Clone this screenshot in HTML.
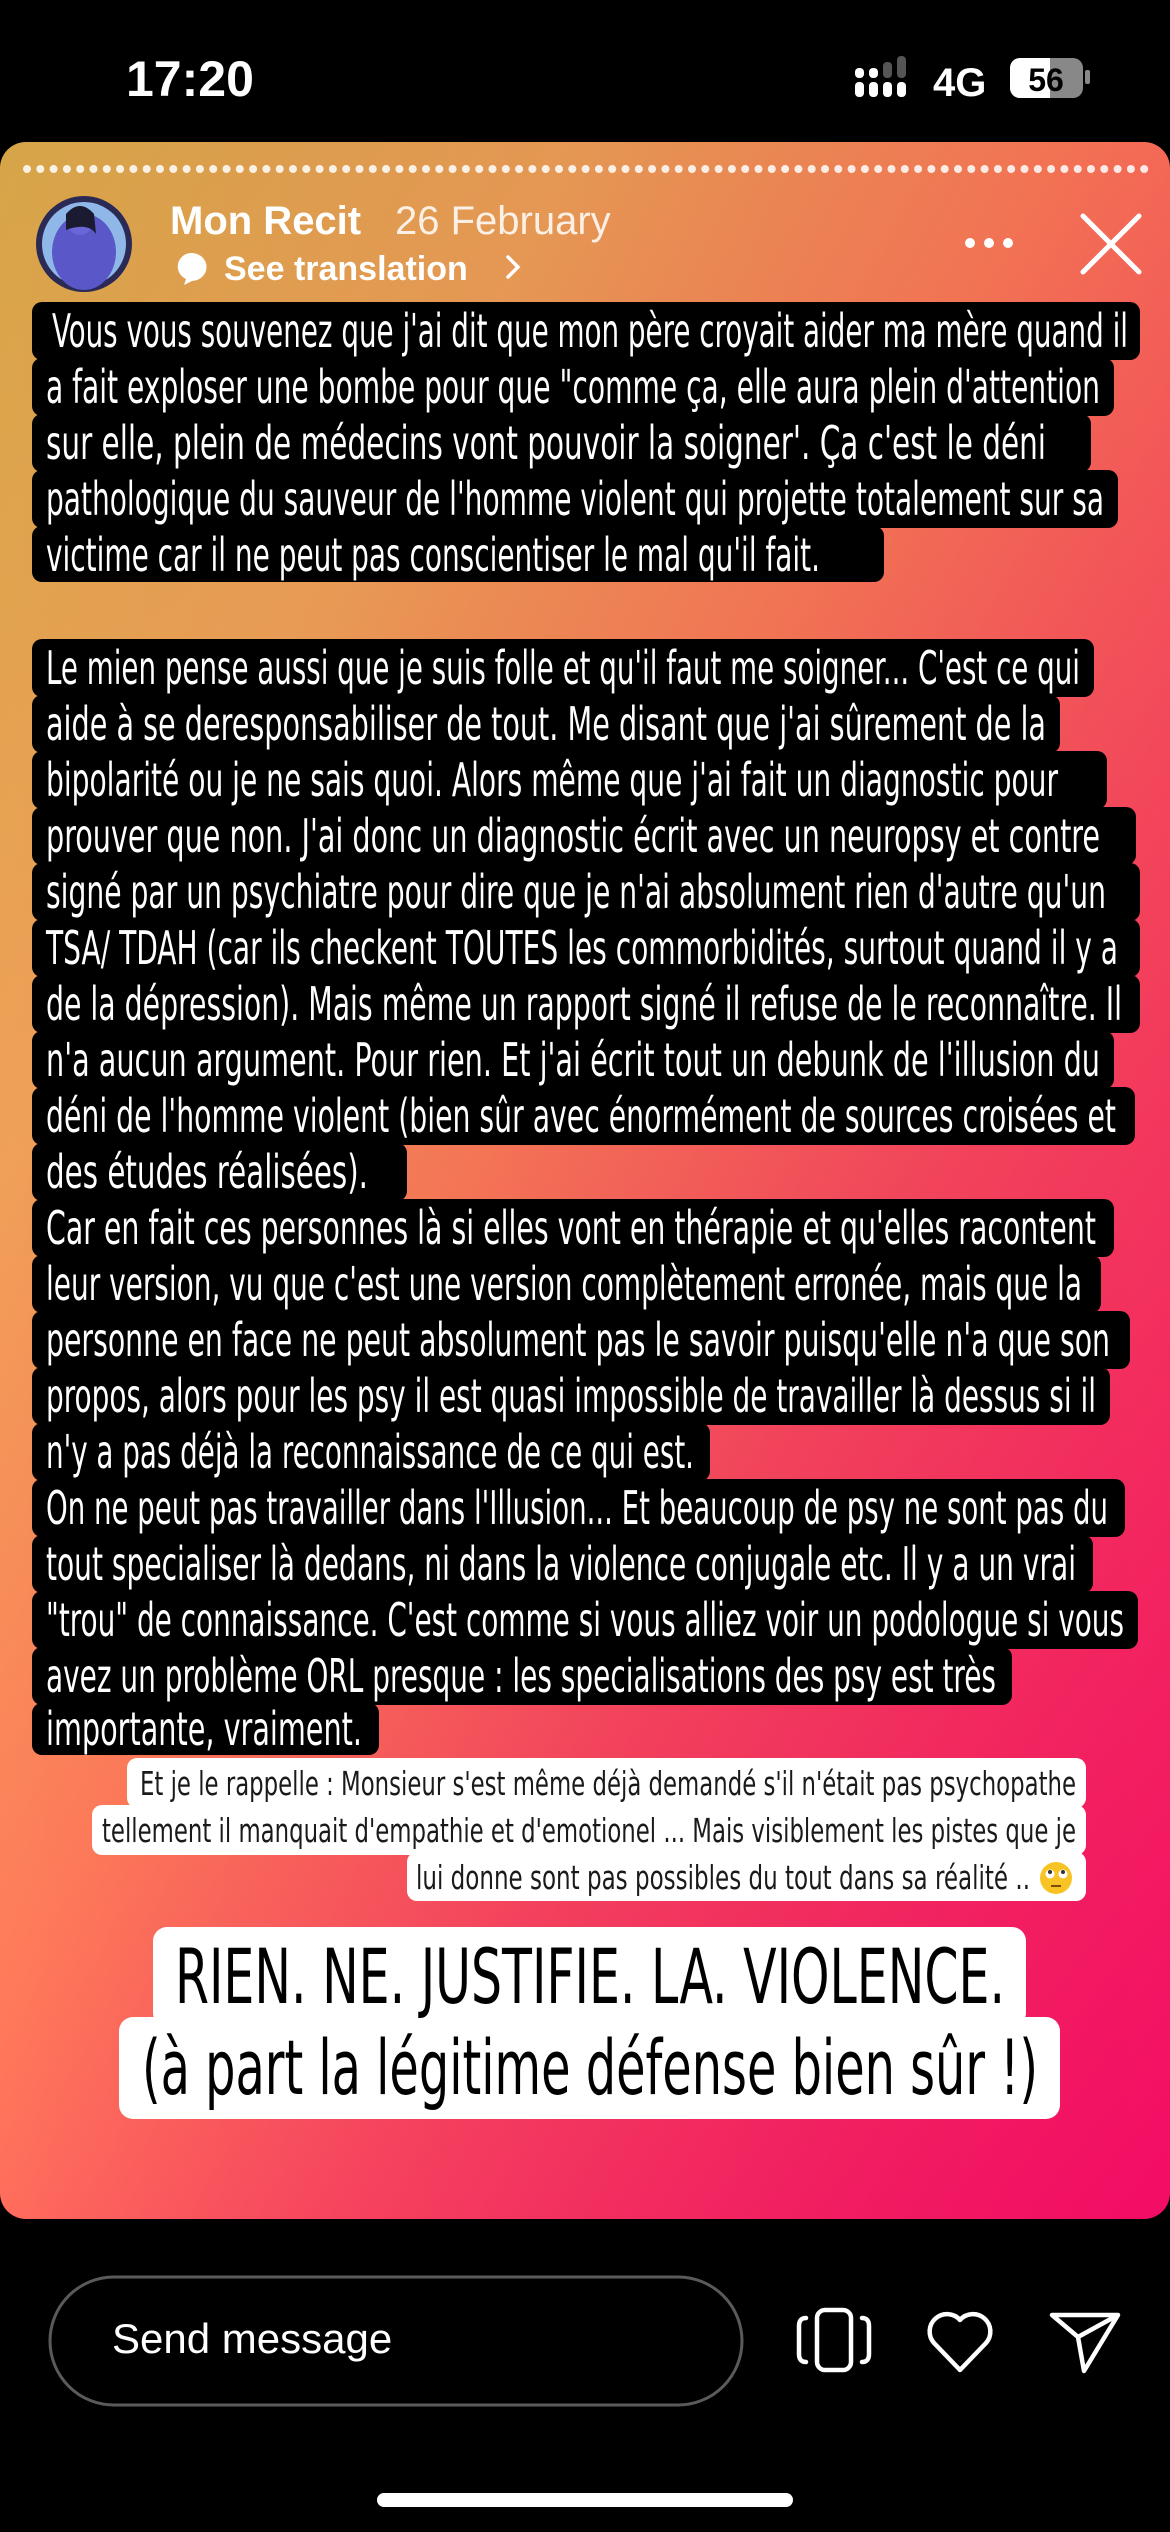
<!DOCTYPE html>
<html><head><meta charset="utf-8"><style>
html,body{margin:0;padding:0;background:#000;width:1170px;height:2532px;overflow:hidden}
svg{display:block}
.n{font-family:"Liberation Sans Narrow","DejaVu Sans Condensed","Liberation Sans",sans-serif}
.s{font-family:"Liberation Sans","DejaVu Sans",sans-serif}
</style></head><body>
<svg width="1170" height="2532" viewBox="0 0 1170 2532" xmlns="http://www.w3.org/2000/svg">
<defs>
<linearGradient id="g" x1="0" y1="0" x2="1" y2="1" gradientUnits="objectBoundingBox">
<stop offset="0" stop-color="#d6a548"/>
<stop offset="0.25" stop-color="#f0a058"/>
<stop offset="0.45" stop-color="#ff7a5a"/>
<stop offset="0.65" stop-color="#ff4462"/>
<stop offset="0.85" stop-color="#ff1a68"/>
<stop offset="1" stop-color="#ff006e"/>
</linearGradient>
<linearGradient id="g2" x1="0" y1="0" x2="1" y2="0">
<stop offset="0" stop-color="#000" stop-opacity="0"/>
<stop offset="1" stop-color="#b05030" stop-opacity="0.15"/>
</linearGradient>
</defs>
<rect width="1170" height="2532" fill="#000"/>
<!-- status bar -->
<text x="126" y="96" class="s" font-size="50" font-weight="bold" fill="#fff">17:20</text>
<g fill="#fff">
<rect x="855" y="82" width="9" height="15" rx="4"/><rect x="869" y="82" width="9" height="15" rx="4"/>
<rect x="883" y="82" width="9" height="15" rx="4"/><rect x="897" y="82" width="9" height="15" rx="4"/>
<rect x="855" y="68" width="9" height="10" rx="4"/><rect x="869" y="68" width="9" height="10" rx="4"/>
</g>
<g fill="#555"><rect x="883" y="62" width="9" height="16" rx="4"/><rect x="897" y="56" width="9" height="22" rx="4"/></g>
<text x="933" y="96" class="s" font-size="40" font-weight="bold" fill="#fff">4G</text>
<rect x="1010" y="58" width="73" height="40" rx="10" fill="#888"/>
<path d="M1020 58 h30 v40 h-30 a10 10 0 0 1 -10 -10 v-20 a10 10 0 0 1 10 -10z" fill="#fff"/>
<rect x="1085" y="70" width="5" height="14" rx="2" fill="#888"/>
<text x="1046" y="91" text-anchor="middle" class="s" font-size="32" font-weight="bold" fill="#000">56</text>
<!-- card -->
<rect x="0" y="142" width="1170" height="2077" rx="26" fill="url(#g)"/>
<rect x="0" y="142" width="1170" height="2077" rx="26" fill="url(#g2)"/>
<line x1="27" y1="169" x2="1147" y2="169" stroke="#fff" stroke-opacity="0.85" stroke-width="8" stroke-linecap="round" stroke-dasharray="0 13.3"/>
<!-- avatar -->
<circle cx="84" cy="244" r="48" fill="#2a2a55"/>
<circle cx="84" cy="244" r="42" fill="#8fb8e8"/>
<ellipse cx="84" cy="252" rx="32" ry="38" fill="#5a58c8"/>
<circle cx="80" cy="222" r="13" fill="#6a66d8"/>
<path d="M66 214 q14 -16 28 0 l2 20 q-8 -12 -30 -4z" fill="#1a1a30"/>
<text x="170" y="234" class="s" font-size="40" fill="#fff" font-weight="bold">Mon Recit</text>
<text x="395" y="234" class="s" font-size="40" fill="#fff" fill-opacity="0.85">26 February</text>
<path d="M186 254 a15 14 0 1 1 6 27 l-8 4 l2 -6 a15 14 0 0 1 0 -25z" fill="#fff"/>
<text x="224" y="280" class="s" font-size="34" font-weight="bold" fill="#fff">See translation</text>
<path d="M508 257 l10 10 l-10 10" stroke="#fff" stroke-width="3.5" fill="none" stroke-linecap="round"/>
<g fill="#fff"><circle cx="970" cy="243" r="5"/><circle cx="989" cy="243" r="5"/><circle cx="1008" cy="243" r="5"/></g>
<path d="M1083 216 L1139 272 M1139 216 L1083 272" stroke="#fff" stroke-width="5" stroke-linecap="round"/>

<!-- block 1 -->
<g fill="#000">
<rect x="32" y="302" width="1108" height="58" rx="10"/>
<rect x="32" y="358" width="1082" height="58" rx="10"/>
<rect x="32" y="414" width="1059" height="58" rx="10"/>
<rect x="32" y="470" width="1086" height="58" rx="10"/>
<rect x="32" y="526" width="852" height="56" rx="10"/>
</g>
<g class="n" font-size="46" fill="#fff">
<text x="52" y="347" textLength="1076" lengthAdjust="spacingAndGlyphs">Vous vous souvenez que j'ai dit que mon père croyait aider ma mère quand il</text>
<text x="46" y="403" textLength="1054" lengthAdjust="spacingAndGlyphs">a fait exploser une bombe pour que &quot;comme ça, elle aura plein d'attention</text>
<text x="46" y="459" textLength="1000" lengthAdjust="spacingAndGlyphs">sur elle, plein de médecins vont pouvoir la soigner'. Ça c'est le déni</text>
<text x="46" y="515" textLength="1058" lengthAdjust="spacingAndGlyphs">pathologique du sauveur de l'homme violent qui projette totalement sur sa</text>
<text x="46" y="571" textLength="774" lengthAdjust="spacingAndGlyphs">victime car il ne peut pas conscientiser le mal qu'il fait.</text>
</g>

<!-- block 2 -->
<g fill="#000">
<rect x="32" y="639" width="1062" height="58" rx="10"/>
<rect x="32" y="695" width="1028" height="58" rx="10"/>
<rect x="32" y="751" width="1075" height="58" rx="10"/>
<rect x="32" y="807" width="1104" height="58" rx="10"/>
<rect x="32" y="863" width="1108" height="58" rx="10"/>
<rect x="32" y="919" width="1108" height="58" rx="10"/>
<rect x="32" y="975" width="1108" height="58" rx="10"/>
<rect x="32" y="1031" width="1082" height="58" rx="10"/>
<rect x="32" y="1087" width="1103" height="58" rx="10"/>
<rect x="32" y="1143" width="375" height="58" rx="10"/>
<rect x="32" y="1199" width="1082" height="58" rx="10"/>
<rect x="32" y="1255" width="1069" height="58" rx="10"/>
<rect x="32" y="1311" width="1098" height="58" rx="10"/>
<rect x="32" y="1367" width="1078" height="58" rx="10"/>
<rect x="32" y="1423" width="678" height="58" rx="10"/>
<rect x="32" y="1479" width="1093" height="58" rx="10"/>
<rect x="32" y="1535" width="1061" height="58" rx="10"/>
<rect x="32" y="1591" width="1106" height="58" rx="10"/>
<rect x="32" y="1647" width="980" height="58" rx="10"/>
<rect x="32" y="1703" width="347" height="52" rx="10"/>
</g>
<g class="n" font-size="46" fill="#fff">
<text x="46" y="684" textLength="1034" lengthAdjust="spacingAndGlyphs">Le mien pense aussi que je suis folle et qu'il faut me soigner... C'est ce qui</text>
<text x="46" y="740" textLength="1000" lengthAdjust="spacingAndGlyphs">aide à se deresponsabiliser de tout. Me disant que j'ai sûrement de la</text>
<text x="46" y="796" textLength="1012" lengthAdjust="spacingAndGlyphs">bipolarité ou je ne sais quoi. Alors même que j'ai fait un diagnostic  pour</text>
<text x="46" y="852" textLength="1054" lengthAdjust="spacingAndGlyphs">prouver que non. J'ai donc un diagnostic écrit avec un neuropsy et contre</text>
<text x="46" y="908" textLength="1060" lengthAdjust="spacingAndGlyphs">signé par un psychiatre pour dire que je n'ai absolument rien d'autre qu'un</text>
<text x="46" y="964" textLength="1072" lengthAdjust="spacingAndGlyphs">TSA/ TDAH (car ils checkent TOUTES les commorbidités, surtout quand il y a</text>
<text x="46" y="1020" textLength="1076" lengthAdjust="spacingAndGlyphs">de la dépression). Mais même un rapport signé il refuse de le reconnaître. Il</text>
<text x="46" y="1076" textLength="1054" lengthAdjust="spacingAndGlyphs">n'a aucun argument. Pour rien. Et j'ai écrit tout un debunk de l'illusion du</text>
<text x="46" y="1132" textLength="1070" lengthAdjust="spacingAndGlyphs">déni de l'homme violent (bien sûr avec énormément de sources croisées et</text>
<text x="46" y="1188" textLength="322" lengthAdjust="spacingAndGlyphs">des études réalisées).</text>
<text x="46" y="1244" textLength="1050" lengthAdjust="spacingAndGlyphs">Car en fait ces personnes là si elles vont en thérapie et qu'elles racontent</text>
<text x="46" y="1300" textLength="1036" lengthAdjust="spacingAndGlyphs">leur version, vu que c'est une version complètement erronée, mais que la</text>
<text x="46" y="1356" textLength="1064" lengthAdjust="spacingAndGlyphs">personne en face ne peut absolument pas le savoir puisqu'elle n'a que son</text>
<text x="46" y="1412" textLength="1050" lengthAdjust="spacingAndGlyphs">propos, alors pour les psy il est quasi impossible de travailler là dessus si il</text>
<text x="46" y="1468" textLength="648" lengthAdjust="spacingAndGlyphs">n'y a pas déjà la reconnaissance de ce qui est.</text>
<text x="46" y="1524" textLength="1062" lengthAdjust="spacingAndGlyphs">On ne peut pas travailler dans l'Illusion... Et beaucoup de psy ne sont pas du</text>
<text x="46" y="1580" textLength="1030" lengthAdjust="spacingAndGlyphs">tout specialiser là dedans, ni dans la violence conjugale etc. Il y a un vrai</text>
<text x="46" y="1636" textLength="1078" lengthAdjust="spacingAndGlyphs">&quot;trou&quot; de connaissance. C'est comme si vous alliez voir un podologue si vous</text>
<text x="46" y="1692" textLength="950" lengthAdjust="spacingAndGlyphs">avez un problème ORL presque : les specialisations des psy est très</text>
<text x="46" y="1745" textLength="316" lengthAdjust="spacingAndGlyphs">importante, vraiment.</text>
</g>

<!-- small white block -->
<g fill="#fff">
<rect x="127" y="1758" width="959" height="50" rx="10"/>
<rect x="92" y="1805" width="994" height="50" rx="10"/>
<rect x="407" y="1852" width="679" height="49" rx="10"/>
</g>
<g class="n" font-size="33" fill="#1a1a1a">
<text x="1076" y="1795" text-anchor="end" textLength="936" lengthAdjust="spacingAndGlyphs">Et je le rappelle : Monsieur s'est même déjà demandé s'il n'était pas psychopathe</text>
<text x="1076" y="1842" text-anchor="end" textLength="974" lengthAdjust="spacingAndGlyphs">tellement il manquait d'empathie et d'emotionel ...  Mais visiblement les pistes que je</text>
<text x="1030" y="1889" text-anchor="end" textLength="614" lengthAdjust="spacingAndGlyphs">lui donne sont pas possibles du tout dans sa réalité ..</text>
</g>
<circle cx="1056" cy="1878" r="16" fill="#f7c325"/>
<circle cx="1050" cy="1874" r="4.5" fill="#fff"/><circle cx="1063" cy="1874" r="4.5" fill="#fff"/>
<circle cx="1050" cy="1872" r="2" fill="#333"/><circle cx="1063" cy="1872" r="2" fill="#333"/>
<line x1="1051" y1="1886" x2="1061" y2="1886" stroke="#7a4a10" stroke-width="2"/>

<!-- big white block -->
<g fill="#fff">
<rect x="153" y="1927" width="873" height="100" rx="14"/>
<rect x="119" y="2017" width="941" height="102" rx="14"/>
</g>
<g class="n" font-size="76" fill="#000">
<text x="590" y="2003" text-anchor="middle" textLength="830" lengthAdjust="spacingAndGlyphs">RIEN. NE. JUSTIFIE. LA. VIOLENCE.</text>
<text x="590" y="2094" text-anchor="middle" textLength="896" lengthAdjust="spacingAndGlyphs">(à part la légitime défense bien sûr !)</text>
</g>

<!-- bottom bar -->
<rect x="50" y="2277" width="692" height="128" rx="64" fill="none" stroke="#5a5a5a" stroke-width="3"/>
<text x="112" y="2353" class="s" font-size="42" fill="#fff">Send message</text>
<g stroke="#fff" stroke-width="4.5" fill="none" stroke-linecap="round" stroke-linejoin="round">
<rect x="817" y="2310" width="34" height="60" rx="8"/>
<path d="M806 2318 q-7 0 -7 8 v28 q0 8 7 8"/>
<path d="M862 2318 q7 0 7 8 v28 q0 8 -7 8"/>
<path d="M960 2370 l-26 -27 a16 16 0 0 1 26 -23 a16 16 0 0 1 26 23 z"/>
<path d="M1052 2315 l66 0 l-34 56 l-6 -34 z M1078 2337 l40 -22"/>
</g>
<rect x="377" y="2493" width="416" height="14" rx="7" fill="#fff"/>
</svg>
</body></html>
